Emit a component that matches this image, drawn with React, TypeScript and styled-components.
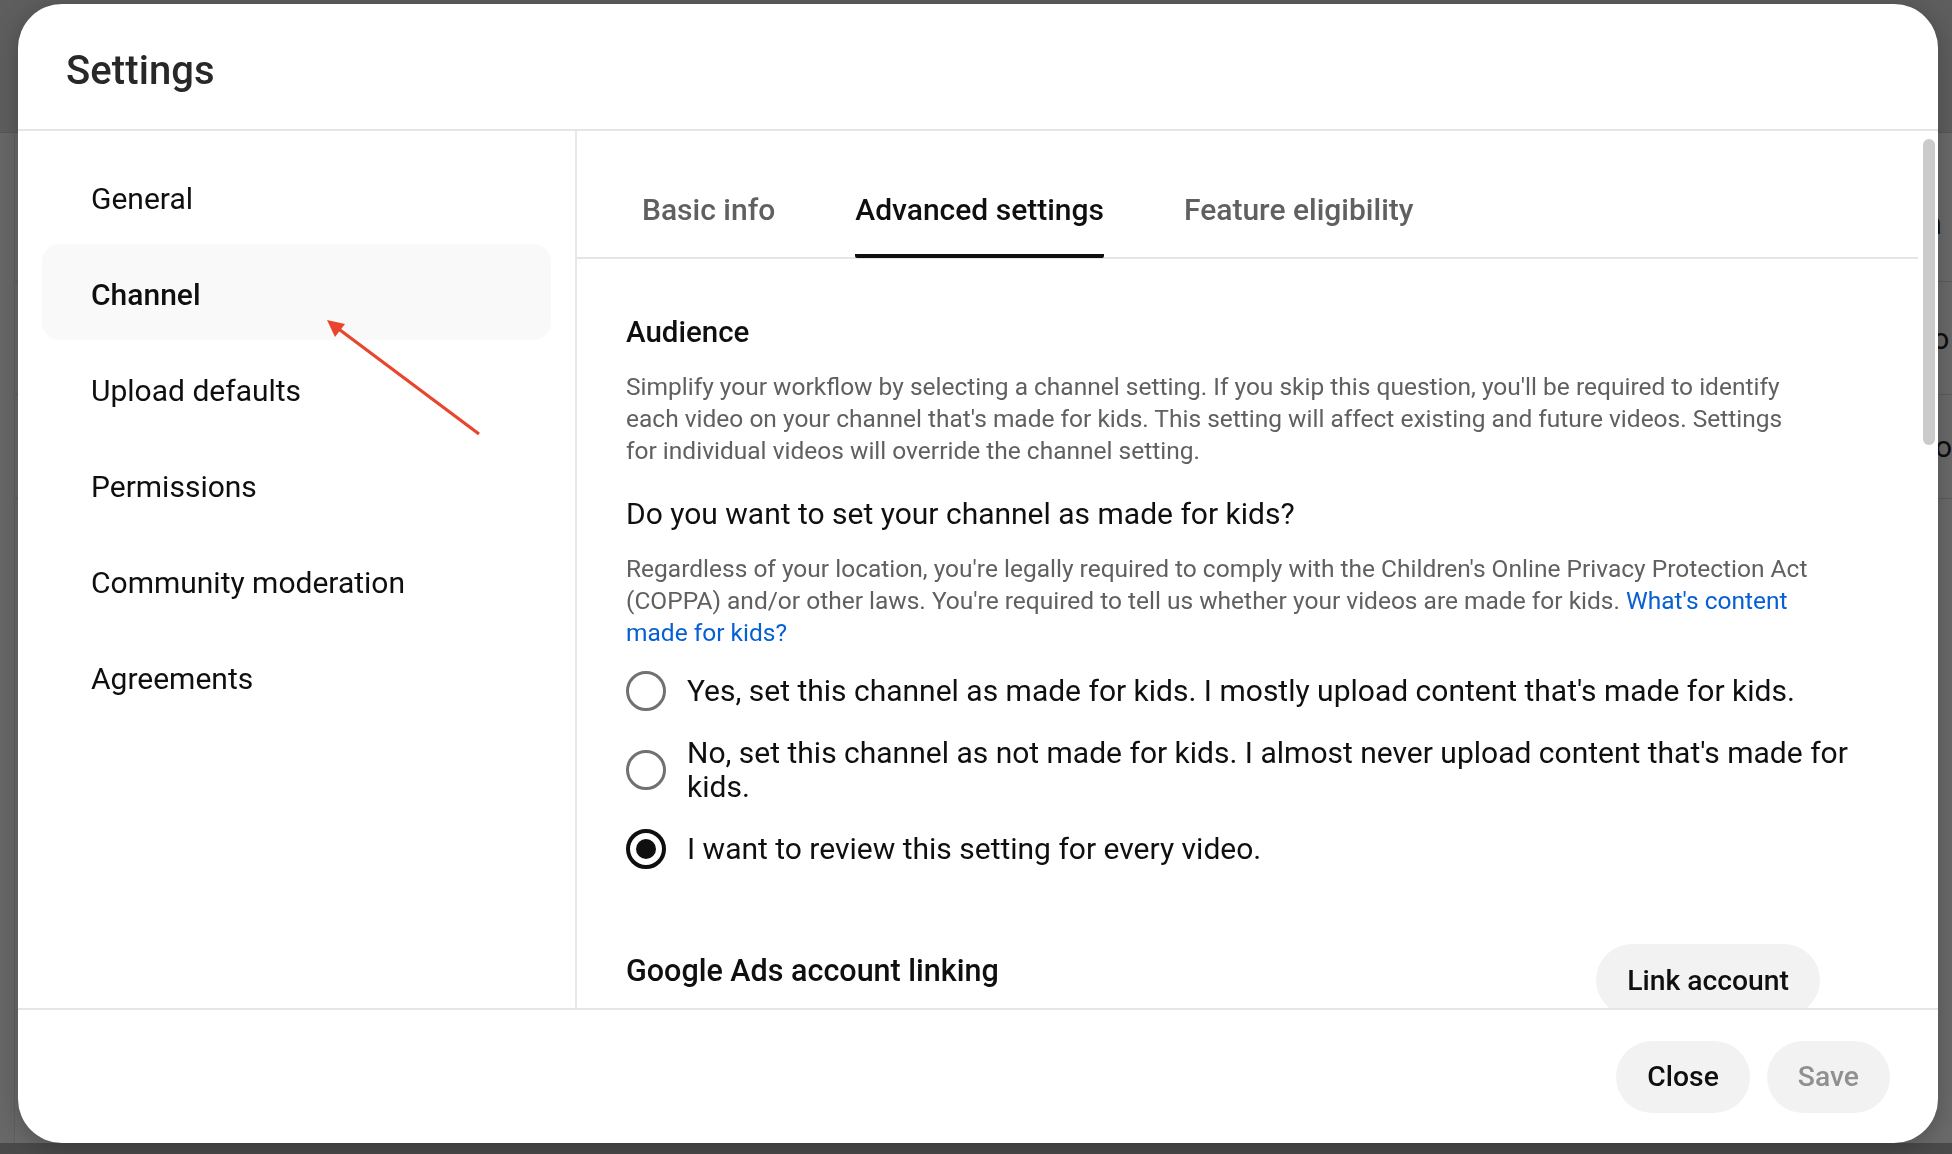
import React from "react";
import styled, { createGlobalStyle } from "styled-components";

const GlobalStyle = createGlobalStyle`
  * { box-sizing: border-box; }
  html, body { margin: 0; padding: 0; }
  body {
    font-family: Roboto, "Liberation Sans", Arial, sans-serif;
    background: #5f5f5f;
    overflow: hidden;
  }
`;

/* ---------- background page (seen through the scrim) ---------- */
const BgPage = styled.div`
  height: 100vh;
  display: flex;
  flex-direction: column;
  background: #6a6a6a;
`;
const BgTop = styled.div`
  height: 133px;
  flex: none;
  background: #5e5e5e;
  border-bottom: 1px solid #575757;
`;
const BgBody = styled.div`
  flex: 1;
  display: flex;
`;
const BgNav = styled.div`
  width: 37px;
  background: #686868;
  border-right: 1px solid #606060;
`;
const BgMain = styled.div`
  flex: 1;
  display: flex;
  flex-direction: column;
`;
const BgRow = styled.div<{ $h: number; $pt: number }>`
  height: ${(p) => p.$h}px;
  padding-top: ${(p) => p.$pt}px;
  display: grid;
  grid-template-columns: 1900px 1fr;
  align-items: center;
  border-bottom: 1px solid #5c5c5c;
  color: #0e0e0e;
  font-size: 30px;
  white-space: nowrap;
  overflow: hidden;
`;
const BgFooter = styled.div`
  height: 11px;
  flex: none;
  background: #4a4a4a;
`;

/* ---------- modal ---------- */
const Scrim = styled.div`
  position: fixed;
  inset: 0;
  padding: 4px 14px 11px 18px;
  display: flex;
`;
const Dialog = styled.div`
  flex: 1;
  background: #fff;
  border-radius: 44px;
  display: flex;
  flex-direction: column;
  overflow: hidden;
  box-shadow: 0 4px 24px rgba(0, 0, 0, 0.25);
  color: #0f0f0f;
`;
const Header = styled.div`
  height: 127px;
  flex: none;
  display: flex;
  align-items: center;
  padding: 8px 0 0 48px;
  border-bottom: 2px solid #e5e5e5;
`;
const Title = styled.h1`
  margin: 0;
  font-size: 40px;
  font-weight: 500;
  color: #282828;
  letter-spacing: 0.1px;
`;
const Main = styled.div`
  flex: 1;
  min-height: 0;
  display: flex;
`;
const Sidebar = styled.nav`
  position: relative;
  width: 559px;
  flex: none;
  border-right: 2px solid #e8e8e8;
  padding: 17px 24px 0 24px;
  display: flex;
  flex-direction: column;
`;
const NavItem = styled.div<{ $active?: boolean }>`
  height: 96px;
  flex: none;
  display: flex;
  align-items: center;
  padding: 5px 0 0 49px;
  border-radius: 18px;
  font-size: 30px;
  font-weight: ${(p) => (p.$active ? 500 : 400)};
  color: #0f0f0f;
  background: ${(p) => (p.$active ? "#f9f9f9" : "transparent")};
`;
const Arrow = styled.svg`
  position: absolute;
  left: 302px;
  top: 181px;
  width: 170px;
  height: 130px;
  overflow: visible;
`;
const ContentWrap = styled.div`
  flex: 1;
  min-width: 0;
  display: flex;
`;
const Content = styled.div`
  flex: 1;
  min-width: 0;
  display: flex;
  flex-direction: column;
  overflow: hidden;
`;
const Tabs = styled.div`
  height: 128px;
  flex: none;
  display: flex;
  gap: 80px;
  padding-left: 65px;
  border-bottom: 2px solid #e5e5e5;
`;
const Tab = styled.div<{ $active?: boolean }>`
  display: flex;
  align-items: flex-start;
  padding-top: 61px;
  font-size: 30px;
  font-weight: 500;
  color: ${(p) => (p.$active ? "#0f0f0f" : "#606060")};
  border-bottom: 4px solid ${(p) => (p.$active ? "#0f0f0f" : "transparent")};
  margin-bottom: -1px;
  border-radius: 0 0 2px 2px;
`;
const Body = styled.div`
  flex: 1;
  overflow: hidden;
  padding: 55px 48px 0 49px;
`;
const H2 = styled.h2`
  margin: 0;
  font-size: 29.5px;
  line-height: 36px;
  font-weight: 500;
  color: #0f0f0f;
`;
const Para = styled.p<{ $mt: number }>`
  margin: ${(p) => p.$mt}px 0 0;
  max-width: 1188px;
  font-size: 24.5px;
  line-height: 32px;
  color: #606060;
`;
const Question = styled.h3`
  margin: 29px 0 0;
  font-size: 30px;
  line-height: 36px;
  font-weight: 400;
  color: #0f0f0f;
`;
const Link = styled.a`
  color: #065fd4;
  text-decoration: none;
`;
const RadioGroup = styled.div`
  margin-top: 22px;
  display: flex;
  flex-direction: column;
  gap: 25px;
`;
const RadioRow = styled.label`
  display: flex;
  align-items: center;
  gap: 21px;
`;
const RadioCircle = styled.span<{ $checked?: boolean }>`
  flex: none;
  width: 40px;
  height: 40px;
  border-radius: 50%;
  border: ${(p) => (p.$checked ? "4px solid #0f0f0f" : "3px solid #717171")};
  display: flex;
  align-items: center;
  justify-content: center;
  &::after {
    content: "";
    display: ${(p) => (p.$checked ? "block" : "none")};
    width: 20px;
    height: 20px;
    border-radius: 50%;
    background: #0f0f0f;
  }
`;
const RadioLabel = styled.span`
  font-size: 30px;
  line-height: 34px;
  color: #0f0f0f;
`;
const AdsRow = styled.div`
  margin-top: 75px;
  display: flex;
  justify-content: space-between;
  align-items: flex-start;
  padding-right: 50px;
`;
const AdsTitle = styled(H2)`
  margin-top: 9px;
  font-size: 30.5px;
`;
const PillButton = styled.button<{ $disabled?: boolean }>`
  height: 72px;
  flex: none;
  padding: 0 31px;
  border: none;
  border-radius: 36px;
  background: #f2f2f2;
  font-family: inherit;
  font-size: 28.3px;
  font-weight: 500;
  color: ${(p) => (p.$disabled ? "#909090" : "#0f0f0f")};
  cursor: pointer;
`;
const Gutter = styled.div`
  width: 20px;
  flex: none;
  padding: 8px 3px 0 5px;
`;
const Thumb = styled.div`
  height: 306px;
  border-radius: 6px;
  background: #cbcbcb;
`;
const Footer = styled.div`
  height: 135px;
  flex: none;
  border-top: 2px solid #e5e5e5;
  display: flex;
  align-items: center;
  justify-content: flex-end;
  gap: 17px;
  padding: 0 48px 0 0;
`;

const navItems = [
  "General",
  "Channel",
  "Upload defaults",
  "Permissions",
  "Community moderation",
  "Agreements",
];

const radios = [
  { label: "Yes, set this channel as made for kids. I mostly upload content that's made for kids.", checked: false },
  { label: "No, set this channel as not made for kids. I almost never upload content that's made for kids.", checked: false },
  { label: "I want to review this setting for every video.", checked: true },
];

export default function App() {
  return (
    <>
      <GlobalStyle />
      <BgPage>
        <BgTop />
        <BgBody>
          <BgNav />
          <BgMain>
            <BgRow $h={149} $pt={32}>
              <span />
              <span>th</span>
            </BgRow>
            <BgRow $h={113} $pt={0}>
              <span />
              <span>po</span>
            </BgRow>
            <BgRow $h={104} $pt={0}>
              <span />
              <span>Co</span>
            </BgRow>
          </BgMain>
        </BgBody>
        <BgFooter />
      </BgPage>

      <Scrim>
        <Dialog>
          <Header>
            <Title>Settings</Title>
          </Header>
          <Main>
            <Sidebar>
              {navItems.map((n) => (
                <NavItem key={n} $active={n === "Channel"}>
                  {n}
                </NavItem>
              ))}
              <Arrow viewBox="0 0 170 130">
                <line x1="159" y1="122" x2="18" y2="16.5" stroke="#e9452d" strokeWidth="3.2" />
                <polygon points="7,8 25,12 15,25" fill="#e9452d" />
              </Arrow>
            </Sidebar>
            <ContentWrap>
              <Content>
                <Tabs>
                  <Tab>Basic info</Tab>
                  <Tab $active>Advanced settings</Tab>
                  <Tab>Feature eligibility</Tab>
                </Tabs>
                <Body>
                  <H2>Audience</H2>
                  <Para $mt={21}>
                    Simplify your workflow by selecting a channel setting. If you skip this question, you'll be required to identify each video on your channel that's made for kids. This setting will affect existing and future videos. Settings for individual videos will override the channel setting.
                  </Para>
                  <Question>Do you want to set your channel as made for kids?</Question>
                  <Para $mt={21}>
                    Regardless of your location, you're legally required to comply with the Children's Online Privacy Protection Act (COPPA) and/or other laws. You're required to tell us whether your videos are made for kids.{" "}
                    <Link href="#">What's content made for kids?</Link>
                  </Para>
                  <RadioGroup>
                    {radios.map((r) => (
                      <RadioRow key={r.label}>
                        <RadioCircle $checked={r.checked} />
                        <RadioLabel>{r.label}</RadioLabel>
                      </RadioRow>
                    ))}
                  </RadioGroup>
                  <AdsRow>
                    <AdsTitle>Google Ads account linking</AdsTitle>
                    <PillButton>Link account</PillButton>
                  </AdsRow>
                </Body>
              </Content>
              <Gutter>
                <Thumb />
              </Gutter>
            </ContentWrap>
          </Main>
          <Footer>
            <PillButton>Close</PillButton>
            <PillButton $disabled>Save</PillButton>
          </Footer>
        </Dialog>
      </Scrim>
    </>
  );
}
